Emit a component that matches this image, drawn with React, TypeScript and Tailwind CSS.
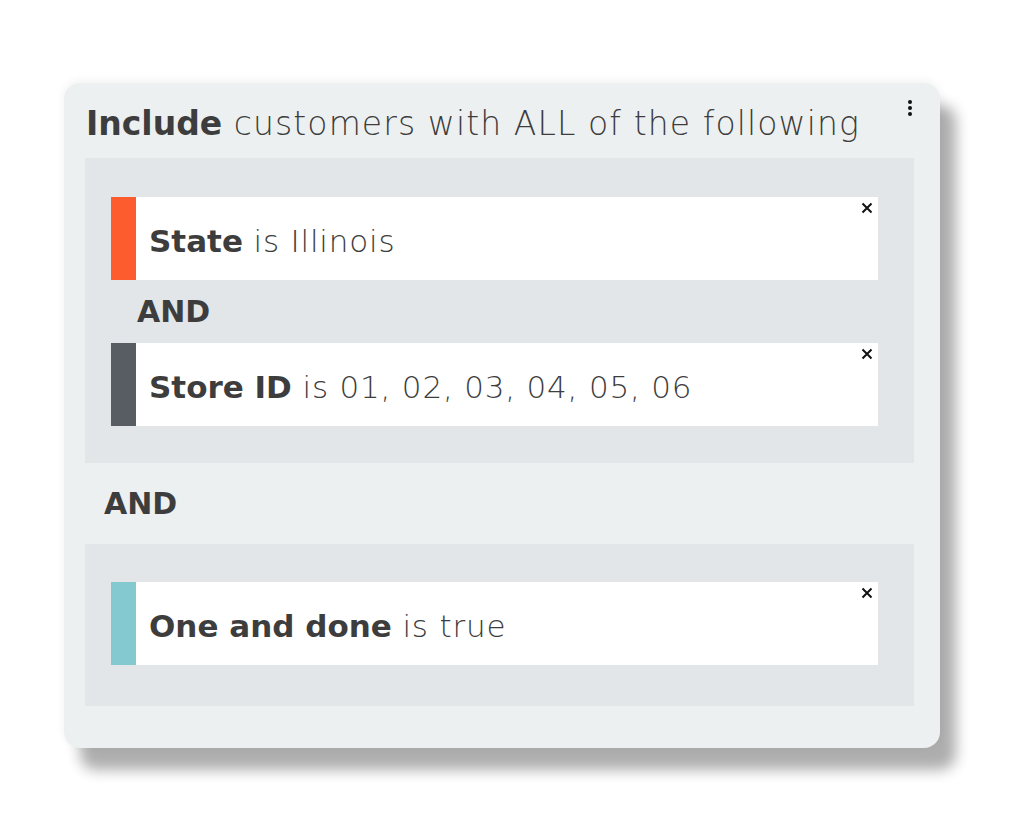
import React from 'react'

const font = { fontFamily: '"DejaVu Sans", Inter, sans-serif' }

function CloseIcon() {
  return (
    <svg width="12" height="12" viewBox="0 0 12 12" className="absolute right-[5px] top-[5px]">
      <path d="M1.5 1.5 L10.5 10.5 M10.5 1.5 L1.5 10.5" stroke="#111" strokeWidth="2" />
    </svg>
  )
}

function Condition({ color, field, value }: { color: string; field: string; value: string }) {
  return (
    <div className="relative flex h-[83px] bg-white">
      <div className={`w-[25px] shrink-0 ${color}`} />
      <div className="flex items-center pl-[13px] pt-[6px] text-[31px] text-[#3d3d3d]">
        <span className="font-bold">{field}</span>
        <span className="font-light tracking-[0.8px]">&nbsp;is {value}</span>
      </div>
      <CloseIcon />
    </div>
  )
}

export default function App() {
  return (
    <div className="min-h-screen bg-white pl-[64px] pt-[83px]" style={font}>
      <div className="relative w-[876px] h-[665px] rounded-[16px] bg-[#edf0f1] shadow-[16px_22px_14px_rgba(0,0,0,0.32),0_-2px_10px_rgba(0,0,0,0.06)] pl-[21px] pr-[26px] pt-[19px]">
        <div className="absolute right-[28px] top-[17px] flex flex-col gap-[2px]">
          <span className="block w-[4px] h-[4px] rounded-full bg-[#111]" />
          <span className="block w-[4px] h-[4px] rounded-full bg-[#111]" />
          <span className="block w-[4px] h-[4px] rounded-full bg-[#111]" />
        </div>
        <div className="h-[56px] pl-[1px] text-[33px] leading-[44px] text-[#3d3d3d]">
          <span className="font-bold">Include</span>
          <span className="font-light tracking-[1.1px]"> customers with ALL of the following</span>
        </div>
        <div className="bg-[#e2e6e9] pl-[26px] pr-[36px] pt-[39px] pb-[37px]">
          <Condition color="bg-[#fd5c2f]" field="State" value="Illinois" />
          <div className="h-[63px] pl-[26px] flex items-center text-[30px] font-bold text-[#3d3d3d]">AND</div>
          <Condition color="bg-[#585c63]" field="Store ID" value="01, 02, 03, 04, 05, 06" />
        </div>
        <div className="h-[81px] pl-[19px] flex items-center text-[30px] font-bold text-[#3d3d3d]">AND</div>
        <div className="bg-[#e2e6e9] pl-[26px] pr-[36px] pt-[38px] pb-[41px]">
          <Condition color="bg-[#84c9d0]" field="One and done" value="true" />
        </div>
      </div>
    </div>
  )
}
